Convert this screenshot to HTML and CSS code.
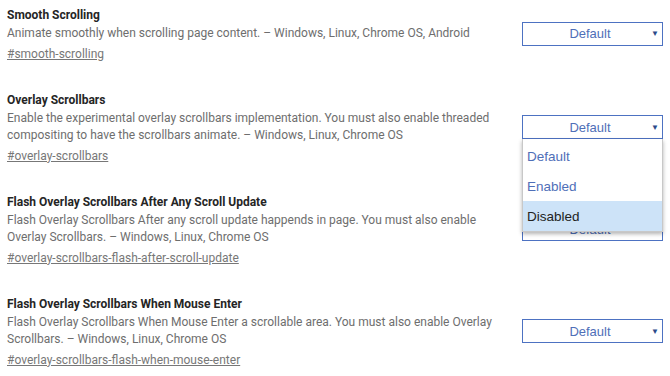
FILE: index.html
```html
<!DOCTYPE html>
<html>
<head>
<meta charset="utf-8">
<link rel="stylesheet" href="styles.css">
</head>
<body>
<div class="flags">
  <div class="flag">
    <div class="info">
      <div class="title">Smooth Scrolling</div>
      <div class="desc">Animate smoothly when scrolling page content. – Windows, Linux, Chrome OS, Android</div>
      <a class="link" href="#smooth-scrolling">#smooth-scrolling</a>
    </div>
    <div class="select"><span class="value">Default</span><span class="arrow">▼</span></div>
  </div>
  <div class="flag">
    <div class="info">
      <div class="title">Overlay Scrollbars</div>
      <div class="desc">Enable the experimental overlay scrollbars implementation. You must also enable threaded compositing to have the scrollbars animate. – Windows, Linux, Chrome OS</div>
      <a class="link" href="#overlay-scrollbars">#overlay-scrollbars</a>
    </div>
    <div class="select-wrap">
      <div class="select"><span class="value">Default</span><span class="arrow">▼</span></div>
      <ul class="menu">
        <li class="opt">Default</li>
        <li class="opt">Enabled</li>
        <li class="opt active">Disabled</li>
      </ul>
    </div>
  </div>
  <div class="flag">
    <div class="info">
      <div class="title">Flash Overlay Scrollbars After Any Scroll Update</div>
      <div class="desc">Flash Overlay Scrollbars After any scroll update happends in page. You must also enable Overlay Scrollbars. – Windows, Linux, Chrome OS</div>
      <a class="link" href="#overlay-scrollbars-flash-after-scroll-update">#overlay-scrollbars-flash-after-scroll-update</a>
    </div>
    <div class="select"><span class="value">Default</span><span class="arrow">▼</span></div>
  </div>
  <div class="flag">
    <div class="info">
      <div class="title">Flash Overlay Scrollbars When Mouse Enter</div>
      <div class="desc">Flash Overlay Scrollbars When Mouse Enter a scrollable area. You must also enable Overlay Scrollbars. – Windows, Linux, Chrome OS</div>
      <a class="link" href="#overlay-scrollbars-flash-when-mouse-enter">#overlay-scrollbars-flash-when-mouse-enter</a>
    </div>
    <div class="select"><span class="value">Default</span><span class="arrow">▼</span></div>
  </div>
</div>
</body>
</html>
```
FILE: styles.css
```css
html, body {
  margin: 0;
  padding: 0;
  background: #fff;
}
body {
  font-family: Roboto, "Liberation Sans", sans-serif;
  font-size: 12px;
  overflow: hidden;
}
.flags {
  display: flex;
  flex-direction: column;
  gap: 27px;
  padding: 5px 7px 0 7px;
}
.flag {
  display: flex;
  align-items: center;
  justify-content: space-between;
}
.info {
  width: 500px;
  display: flex;
  flex-direction: column;
  align-items: flex-start;
}
.title {
  font-weight: bold;
  color: #252525;
  line-height: 20px;
}
.desc {
  color: #6e6e6e;
  line-height: 17.5px;
}
.link {
  color: #777;
  text-decoration: underline;
  line-height: 18px;
  margin-top: 2px;
}
.select-wrap {
  position: relative;
}
.select {
  width: 139px;
  height: 22px;
  border: 1px solid #4d72c2;
  display: flex;
  align-items: center;
  background: #fff;
  font-family: "Liberation Sans", Arial, sans-serif;
  font-size: 13px;
  color: #4f6fb8;
}
.value {
  flex: 1;
  text-align: center;
  padding-left: 6px;
}
.arrow {
  font-size: 8px;
  color: #2b4a8a;
  width: 8px;
  margin-right: 3px;
}
.menu {
  position: absolute;
  left: 0;
  top: 24px;
  width: 139px;
  margin: 0;
  padding: 2px 0 0 0;
  list-style: none;
  background: #fff;
  border: 1px solid #c8c8c8;
  border-top: none;
  box-shadow: 0 2px 4px rgba(0, 0, 0, 0.3);
  z-index: 2;
  font-family: "Liberation Sans", Arial, sans-serif;
  font-size: 13.5px;
}
.opt {
  height: 30px;
  line-height: 31px;
  padding-left: 4px;
  color: #4f6fb8;
}
.opt.active {
  background: #cde3f8;
  color: #222;
}
```
